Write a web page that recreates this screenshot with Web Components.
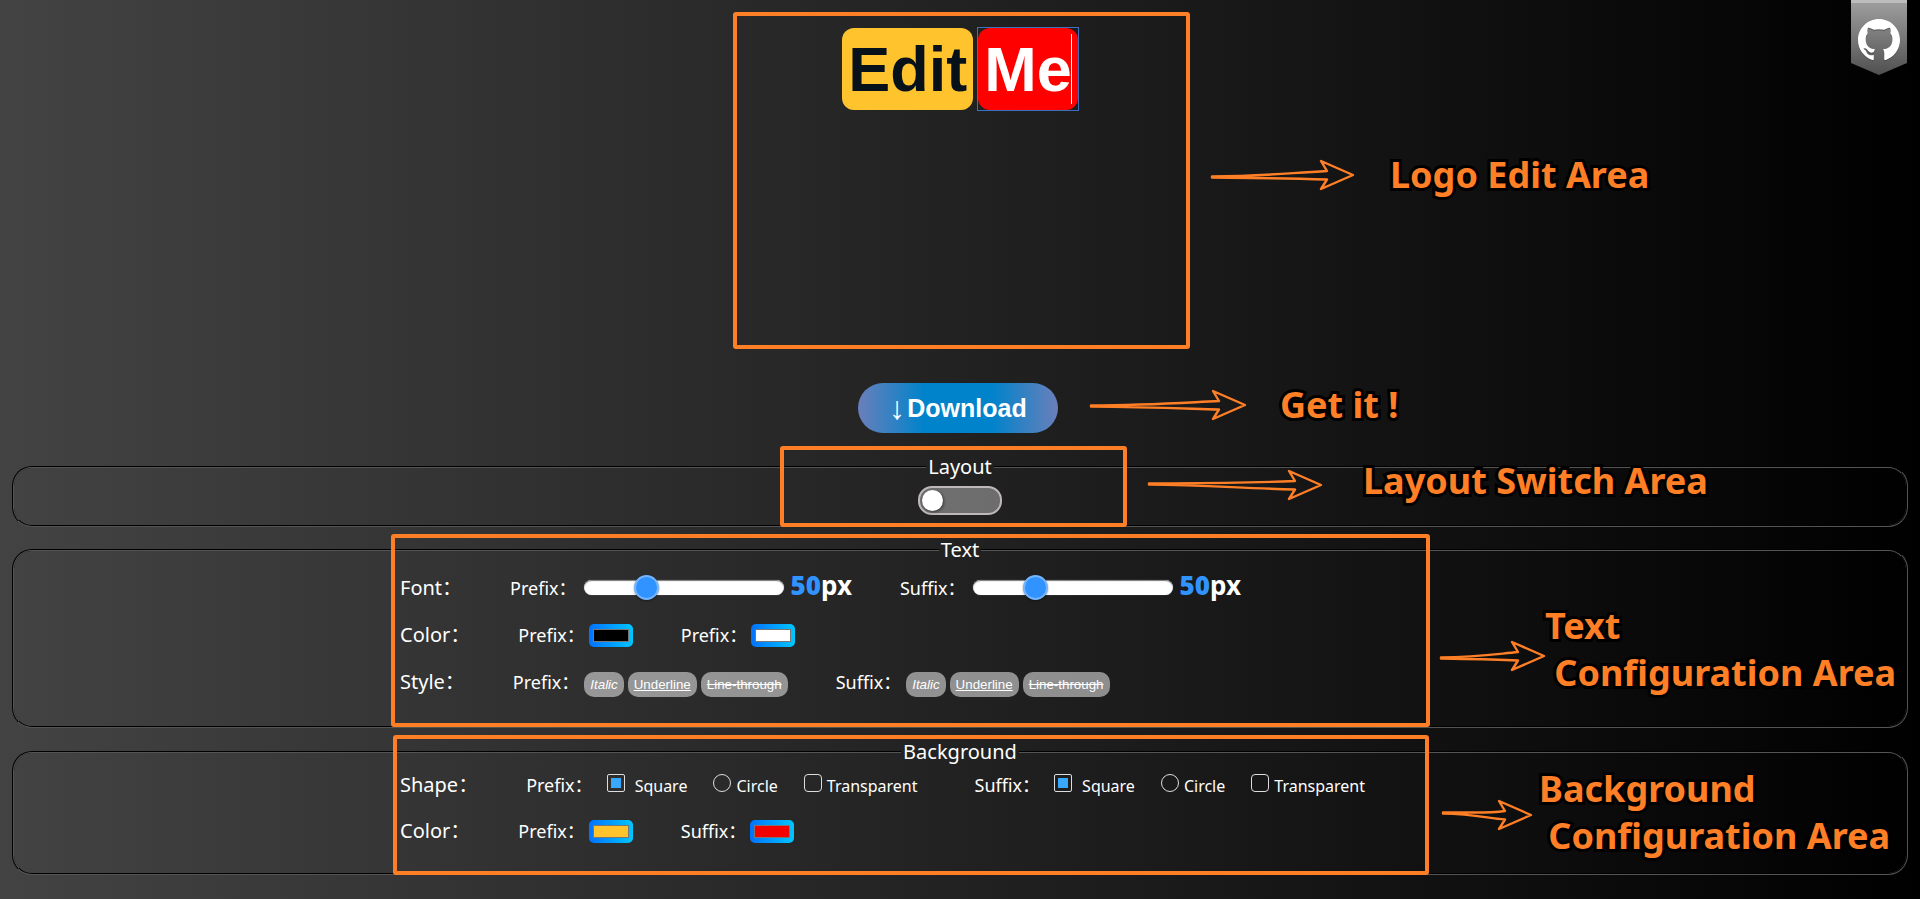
<!DOCTYPE html>
<html lang="en">
<head>
<meta charset="utf-8">
<title>Logo Maker</title>
<style>
  html { background: #000; }
  body {
    margin: 0;
    min-height: 100vh;
    color: #fff;
    font-family: "Noto Sans", "Noto Sans CJK SC", sans-serif;
    background: linear-gradient(to right, #434343, #000);
    overflow-x: hidden;
  }
</style>
</head>
<body>
<logo-app></logo-app>
<script>
function define(name, html, setup) {
  customElements.define(name, class extends HTMLElement {
    connectedCallback() {
      if (this.shadowRoot) return;
      const root = this.attachShadow({ mode: 'open' });
      const t = document.createElement('template');
      t.innerHTML = html;
      root.append(t.content.cloneNode(true));
      if (setup) setup(this, root);
    }
  });
}
const fillLabel = (host, root) => {
  root.querySelector('.name').textContent = host.getAttribute('label') + '：';
};

/* Annotations float over the page, measured from its centre line. */
define('note-frame', `
  <style>
    :host {
      position: absolute; z-index: 1; box-sizing: border-box; pointer-events: none;
      left: calc(50% + var(--x)); top: var(--y); width: var(--w); height: var(--h);
      border: 4px solid #ff7f27; border-radius: 3px;
    }
  </style>`);

define('note-arrow', `
  <style>
    :host { position: absolute; z-index: 1; left: calc(50% + var(--x)); top: var(--y); pointer-events: none; }
    svg { display: block; overflow: visible; }
    path { fill: none; stroke: #ff7f27; stroke-width: 2.4; stroke-linejoin: round; stroke-linecap: round; }
  </style>
  <svg height="30" aria-hidden="true"><path/></svg>`, (host, root) => {
  const len = +host.getAttribute('length'), tail = 15 + +host.getAttribute('tail');
  const head = len - 33, neck = len - 27;
  root.querySelector('svg').setAttribute('width', len);
  root.querySelector('path').setAttribute('d',
    `M1 ${tail - .6} C${len * .35} ${tail - .8} ${len * .5} 13.5 ${neck} 11 L${head} 1 L${len - 1} 15 L${head} 29 L${neck} 19.5 C${len * .5} 18 ${len * .35} ${tail + 1} 1 ${tail + .6} Z`);
});

define('note-label', `<style>
    :host {
      display: block;
      position: absolute; z-index: 1; left: calc(50% + var(--x)); top: var(--y);
      color: #ff7f27; font-weight: 700; font-size: 36px; line-height: 47px; white-space: pre;
      -webkit-text-stroke: 6px #000; paint-order: stroke fill;
    }
  </style><slot></slot>`);

define('github-ribbon', `
  <style>
    :host { position: absolute; top: 0; right: 13px; }
    a, svg { display: block; }
  </style>
  <a href="https://github.com" aria-label="GitHub">
    <svg width="56" height="75" viewBox="0 0 56 75">
      <defs><linearGradient id="g" x2="0" y2="1">
        <stop offset="0" stop-color="#a0a0a0"/><stop offset="1" stop-color="#505050"/>
      </linearGradient></defs>
      <path fill="url(#g)" d="M0 0h56v63L28 75 0 63z"/>
      <path fill="#bdbdbd" d="M0 0h56v3H0z"/>
      <g transform="translate(7 19) scale(2.625)">
        <path fill="#444" opacity=".5" transform="translate(0 .5)" d="M8 0C3.58 0 0 3.58 0 8c0 3.54 2.29 6.53 5.47 7.59.4.07.55-.17.55-.38 0-.19-.01-.82-.01-1.49-2.01.37-2.53-.49-2.69-.94-.09-.23-.48-.94-.82-1.13-.28-.15-.68-.52-.01-.53.63-.01 1.08.58 1.23.82.72 1.21 1.87.87 2.33.66.07-.52.28-.87.51-1.07-1.78-.2-3.64-.89-3.64-3.95 0-.87.31-1.59.82-2.15-.08-.2-.36-1.02.08-2.12 0 0 .67-.21 2.2.82.64-.18 1.32-.27 2-.27s1.36.09 2 .27c1.53-1.04 2.2-.82 2.2-.82.44 1.1.16 1.92.08 2.12.51.56.82 1.27.82 2.15 0 3.07-1.87 3.75-3.65 3.95.29.25.54.73.54 1.48 0 1.07-.01 1.93-.01 2.2 0 .21.15.46.55.38A8.01 8.01 0 0 0 16 8c0-4.42-3.58-8-8-8z"/>
        <path fill="#fff" d="M8 0C3.58 0 0 3.58 0 8c0 3.54 2.29 6.53 5.47 7.59.4.07.55-.17.55-.38 0-.19-.01-.82-.01-1.49-2.01.37-2.53-.49-2.69-.94-.09-.23-.48-.94-.82-1.13-.28-.15-.68-.52-.01-.53.63-.01 1.08.58 1.23.82.72 1.21 1.87.87 2.33.66.07-.52.28-.87.51-1.07-1.78-.2-3.64-.89-3.64-3.95 0-.87.31-1.59.82-2.15-.08-.2-.36-1.02.08-2.12 0 0 .67-.21 2.2.82.64-.18 1.32-.27 2-.27s1.36.09 2 .27c1.53-1.04 2.2-.82 2.2-.82.44 1.1.16 1.92.08 2.12.51.56.82 1.27.82 2.15 0 3.07-1.87 3.75-3.65 3.95.29.25.54.73.54 1.48 0 1.07-.01 1.93-.01 2.2 0 .21.15.46.55.38A8.01 8.01 0 0 0 16 8c0-4.42-3.58-8-8-8z"/>
      </g>
    </svg>
  </a>`);

define('logo-editor', `
  <style>
    :host { display: flex; justify-content: center; align-items: flex-start; gap: 5px; }
    span {
      position: relative; padding: 4px 6px; border-radius: 12px;
      font: 700 63px/74px "Liberation Sans", Arial, sans-serif; outline: none;
    }
    .prefix { background: #ffc32e; color: #07111a; }
    .suffix { background: #f00; color: #fff; }
    .box { outline: 1px solid #3f6fbf; }
    .box .suffix { display: block; }
    .box .suffix::after {
      content: ""; position: absolute; right: 6px; top: 6px; width: 1px; height: 70px; background: #fff;
    }
  </style>
  <span class="prefix" contenteditable="true" spellcheck="false">Edit</span>
  <div class="box"><span class="suffix" contenteditable="true" spellcheck="false">Me</span></div>`);

define('download-button', `
  <style>
    :host { display: block; }
    button {
      display: flex; align-items: center; justify-content: center; gap: 2px;
      width: 200px; height: 50px; padding: 0; border: 0; border-radius: 25px; color: #fff;
      font: 700 25px/30px "Liberation Sans", Arial, sans-serif; cursor: pointer;
      background: linear-gradient(to right, #6a7fba, #0083cb 33%, #0083cb 67%, #6a7fba);
    }
    .arrow { font-weight: 400; font-size: 32px; }
  </style>
  <button type="button"><span class="arrow">↓</span><span>Download</span></button>`);

define('layout-switch', `
  <style>
    :host { display: flex; justify-content: center; padding: 9px 0 10px; }
    input {
      appearance: none; display: flex; align-items: center; box-sizing: border-box;
      width: 84px; height: 29px; margin: 0; padding: 0 2px; border: 2px solid #bfb8ba;
      border-radius: 14px; background: rgba(255,255,255,.35); cursor: pointer;
    }
    input::before {
      content: ""; width: 21px; height: 21px; border-radius: 50%; background: #fff;
      box-shadow: 1px 1px 3px rgba(0,0,0,.5);
    }
    input:checked { justify-content: flex-end; }
  </style>
  <input type="checkbox" role="switch" aria-label="Layout">`);

define('config-panel', `
  <style>
    :host { display: block; position: relative; padding: 0 12px; }
    fieldset { margin: 0; padding: 0; border: 2px groove #000; border-radius: 20px; min-width: 0; }
    legend { margin: 0 auto; padding: 0 2px; font-size: 20px; line-height: 20px; }
  </style>
  <fieldset><legend></legend><slot></slot></fieldset>
  <slot name="note"></slot>`, (host, root) => {
  root.querySelector('legend').textContent = host.getAttribute('label');
});

define('config-rows', `
  <style>
    :host { display: block; box-sizing: border-box; width: 1120px; max-width: 100%; margin: 0 auto; padding: var(--pad); }
  </style><slot></slot>`);

define('config-row', `
  <style>
    :host { display: flex; align-items: baseline; gap: 48px; height: var(--row); white-space: nowrap; }
    .name { font-size: 20px; line-height: var(--row); }
    ::slotted(*) { line-height: 24px; font-size: 18px; }
  </style>
  <span class="name"></span><slot></slot>`, fillLabel);

define('size-field', `
  <style>
    :host { display: flex; align-items: baseline; gap: 7px; }
    input {
      appearance: none; box-sizing: border-box; width: 200px; height: 15px; margin: 0;
      border-radius: 8px; background: #fff; box-shadow: inset 0 1px 1px #777, 0 0 1px #999;
    }
    input::-webkit-slider-thumb {
      appearance: none; box-sizing: border-box; width: 25px; height: 25px; border-radius: 50%;
      border: 2px solid #74b5ff; background: #3093ff; box-shadow: 0 1px 2px rgba(0,0,0,.4);
    }
    output { font-size: 26px; font-weight: 700; }
    b { color: #3093ff; }
  </style>
  <label class="name" for="size"></label>
  <input id="size" type="range" min="10" max="150" value="50">
  <output for="size"><b>50</b>px</output>`, (host, root) => {
  fillLabel(host, root);
  const input = root.querySelector('input');
  input.addEventListener('input', () => root.querySelector('b').textContent = input.value);
});

define('color-field', `
  <style>
    :host { display: flex; align-items: baseline; gap: 4px; }
    input {
      appearance: none; box-sizing: border-box; width: 44px; height: 23px; margin: 0 0 -6px;
      padding: 5px 4px; border: 0; border-radius: 5px;
      background: linear-gradient(to right, #0072ff, #00c6ff);
    }
    input::-webkit-color-swatch-wrapper { padding: 0; }
    input::-webkit-color-swatch { border: 1px solid #777; border-radius: 0; }
  </style>
  <label class="name" for="color"></label><input id="color" type="color">`, (host, root) => {
  fillLabel(host, root);
  root.querySelector('input').value = host.getAttribute('value');
});

define('style-field', `
  <style>
    :host { display: flex; align-items: baseline; gap: 4px; }
    button {
      height: 25px; padding: 0 6px; border: 0; border-radius: 10px; color: #fff;
      font-family: "Liberation Sans", Arial, sans-serif; background: rgba(255,255,255,.5);
    }
    .i { font-style: italic; } .u { text-decoration: underline; } .s { text-decoration: line-through; }
    .name { margin-right: 1px; }
  </style>
  <span class="name"></span>
  <button type="button" class="i">Italic</button>
  <button type="button" class="u">Underline</button>
  <button type="button" class="s">Line-through</button>`, fillLabel);

define('shape-field', `
  <style>
    :host { display: flex; align-items: baseline; gap: 26px; margin-right: 9px; }
    .first { display: flex; align-items: baseline; gap: 14px; }
    .opt { display: flex; align-items: baseline; gap: 5px; font-size: 16px; }
    .first .opt { gap: 10px; }
    input {
      appearance: none; box-sizing: border-box; width: 18px; height: 18px; margin: 0;
      padding: 3px; border: 1px solid #ddd; border-radius: 2px;
    }
    input[type=radio] { border-radius: 50%; }
    .clear input { border-radius: 4px; }
    input:checked { background: #38a9fa content-box; }
  </style>
  <div class="first"><span class="name"></span>
    <label class="opt"><input type="checkbox" checked>Square</label></div>
  <label class="opt"><input type="radio">Circle</label>
  <label class="opt clear"><input type="checkbox">Transparent</label>`, fillLabel);

define('logo-app', `
  <style>
    :host { display: block; position: relative; min-height: 100vh; overflow: hidden; }
    section { position: relative; }
    .stage { padding: 28px 0 34px; min-height: 321px; }
    .get { display: flex; justify-content: center; margin-right: 4px; }
    main { display: flow-root; }
    .layout { margin-top: 24px; }
    .text { margin-top: 13px; --row: 47px; --pad: 4px 0 21px; }
    .background { margin-top: 14px; --row: 46px; --pad: 0 0 19px; }
  </style>
  <main>
    <section class="stage">
      <logo-editor></logo-editor>
      <note-frame style="--x:-227px;--y:12px;--w:457px;--h:337px"></note-frame>
      <note-arrow length="143" tail="2" style="--x:251px;--y:160px"></note-arrow>
      <note-label style="--x:430px;--y:151px">Logo Edit Area</note-label>
    </section>
    <section>
      <div class="get"><download-button></download-button></div>
      <note-arrow length="156" tail="1" style="--x:130px;--y:7px"></note-arrow>
      <note-label style="--x:320px;--y:-2px">Get it !</note-label>
    </section>
    <config-panel class="layout" label="Layout">
      <layout-switch></layout-switch>
      <note-frame slot="note" style="--x:-180px;--y:-11px;--w:347px;--h:81px"></note-frame>
      <note-arrow slot="note" length="174" tail="-1" style="--x:188px;--y:13px"></note-arrow>
      <note-label slot="note" style="--x:403px;--y:0px">Layout Switch Area</note-label>
    </config-panel>
    <config-panel class="text" label="Text">
      <config-rows>
        <config-row label="Font">
          <size-field label="Prefix"></size-field>
          <size-field label="Suffix"></size-field>
        </config-row>
        <config-row label="Color">
          <color-field label="Prefix" value="#000000"></color-field>
          <color-field label="Prefix" value="#ffffff"></color-field>
        </config-row>
        <config-row label="Style">
          <style-field label="Prefix"></style-field>
          <style-field label="Suffix"></style-field>
        </config-row>
      </config-rows>
      <note-frame slot="note" style="--x:-569px;--y:-6px;--w:1039px;--h:193px"></note-frame>
      <note-arrow slot="note" length="105" tail="2" style="--x:480px;--y:101px"></note-arrow>
      <note-label slot="note" style="--x:585px;--y:62px">Text
 Configuration Area</note-label>
    </config-panel>
    <config-panel class="background" label="Background">
      <config-rows>
        <config-row label="Shape">
          <shape-field label="Prefix"></shape-field>
          <shape-field label="Suffix"></shape-field>
        </config-row>
        <config-row label="Color">
          <color-field label="Prefix" value="#ffc32e"></color-field>
          <color-field label="Suffix" value="#f50000"></color-field>
        </config-row>
      </config-rows>
      <note-frame slot="note" style="--x:-567px;--y:-7px;--w:1036px;--h:140px"></note-frame>
      <note-arrow slot="note" length="90" tail="-2" style="--x:482px;--y:58px"></note-arrow>
      <note-label slot="note" style="--x:579px;--y:23px">Background
 Configuration Area</note-label>
    </config-panel>
  </main>
  <github-ribbon></github-ribbon>`);
</script>
</body>
</html>
